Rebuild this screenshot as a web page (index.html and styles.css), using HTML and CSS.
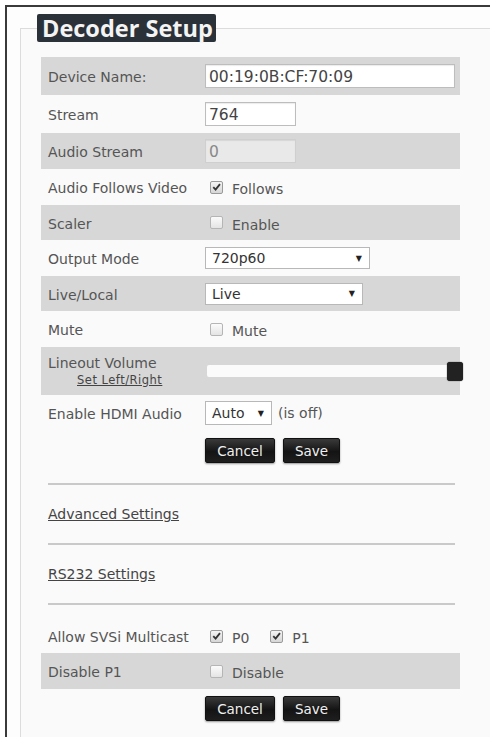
FILE: index.html
```html
<!DOCTYPE html>
<html>
<head>
<meta charset="utf-8">
<link rel="stylesheet" href="styles.css">
</head>
<body>
<div class="frame">
  <fieldset class="setup">
    <legend class="title">Decoder Setup</legend>
    <div class="rows">
      <div class="row alt tall">
        <div class="label">Device Name:</div>
        <div class="ctrl"><div class="input wide">00:19:0B:CF:70:09</div></div>
      </div>
      <div class="row tall">
        <div class="label">Stream</div>
        <div class="ctrl"><div class="input short">764</div></div>
      </div>
      <div class="row alt">
        <div class="label">Audio Stream</div>
        <div class="ctrl"><div class="input short disabled">0</div></div>
      </div>
      <div class="row">
        <div class="label">Audio Follows Video</div>
        <div class="ctrl"><span class="check on"><svg viewBox="0 0 12 12" width="12" height="12"><path d="M2.5 6.2 L5 8.8 L9.8 2.8" fill="none" stroke="#333" stroke-width="2"/></svg></span><span class="opt">Follows</span></div>
      </div>
      <div class="row alt short">
        <div class="label">Scaler</div>
        <div class="ctrl"><span class="check"></span><span class="opt">Enable</span></div>
      </div>
      <div class="row">
        <div class="label">Output Mode</div>
        <div class="ctrl"><div class="select mode"><span>720p60</span><span class="arrow">▼</span></div></div>
      </div>
      <div class="row alt short">
        <div class="label">Live/Local</div>
        <div class="ctrl"><div class="select live"><span>Live</span><span class="arrow">▼</span></div></div>
      </div>
      <div class="row">
        <div class="label">Mute</div>
        <div class="ctrl"><span class="check"></span><span class="opt">Mute</span></div>
      </div>
      <div class="row alt volume">
        <div class="label stack"><span>Lineout Volume</span><a class="small">Set Left/Right</a></div>
        <div class="ctrl"><div class="slider"><div class="track"></div><div class="thumb"></div></div></div>
      </div>
      <div class="row">
        <div class="label">Enable HDMI Audio</div>
        <div class="ctrl"><div class="select auto"><span>Auto</span><span class="arrow">▼</span></div><span class="note">(is off)</span></div>
      </div>
      <div class="buttons first">
        <button class="btn cancel">Cancel</button>
        <button class="btn save">Save</button>
      </div>
      <hr class="sep">
      <div class="linkrow"><a class="link">Advanced Settings</a></div>
      <hr class="sep">
      <div class="linkrow"><a class="link">RS232 Settings</a></div>
      <hr class="sep">
      <div class="row multicast">
        <div class="label">Allow SVSi Multicast</div>
        <div class="ctrl"><span class="check on"><svg viewBox="0 0 12 12" width="12" height="12"><path d="M2.5 6.2 L5 8.8 L9.8 2.8" fill="none" stroke="#333" stroke-width="2"/></svg></span><span class="opt">P0</span><span class="check on gapl"><svg viewBox="0 0 12 12" width="12" height="12"><path d="M2.5 6.2 L5 8.8 L9.8 2.8" fill="none" stroke="#333" stroke-width="2"/></svg></span><span class="opt">P1</span></div>
      </div>
      <div class="row alt">
        <div class="label">Disable P1</div>
        <div class="ctrl"><span class="check"></span><span class="opt">Disable</span></div>
      </div>
      <div class="buttons second">
        <button class="btn cancel">Cancel</button>
        <button class="btn save">Save</button>
      </div>
    </div>
  </fieldset>
</div>
</body>
</html>
```
FILE: styles.css
```css
html, body {
  margin: 0;
  padding: 0;
  background: #ffffff;
}
body {
  font-family: "DejaVu Sans", Verdana, sans-serif;
  color: #555;
  overflow: hidden;
}
.frame {
  margin: 5px 0 0 5px;
  height: 740px;
  border-top: 2px solid #3a3a3a;
  border-left: 2px solid #3a3a3a;
  background: #fdfdfd;
  padding: 0 0 0 13px;
  box-sizing: border-box;
}
.setup {
  margin: 7px 0 0 0;
  padding: 0 0 20px 20px;
  border: 1px solid #dcdcdc;
  border-right: none;
  background: #fafafa;
  min-height: 730px;
  box-sizing: border-box;
}
.title {
  margin-left: -4px;
  padding: 0 3px 0 5px;
  height: 28px;
  line-height: 28px;
  background: #2b3139;
  color: #f4f4f4;
  font-family: "Open Sans", "DejaVu Sans", sans-serif;
  font-weight: 700;
  font-size: 23.5px;
  border-radius: 2px;
}
.rows {
  width: 419px;
  margin-top: 15px;
}
.row {
  display: grid;
  grid-template-columns: 164px 1fr;
  align-items: center;
  height: 36px;
}
.row.tall {
  height: 38px;
}
.row.short {
  height: 35px;
}
.row.alt {
  background: #d7d7d7;
}
.label {
  padding-left: 7px;
  padding-top: 2px;
  font-size: 14px;
  color: #555;
  white-space: nowrap;
}
.ctrl {
  display: flex;
  align-items: center;
}
.input {
  height: 24px;
  line-height: 24px;
  box-sizing: border-box;
  border: 1px solid #bdbdbd;
  background: #fff;
  padding-left: 3px;
  font-size: 15.5px;
  color: #444;
  box-shadow: inset 0 1px 1px rgba(0,0,0,0.08);
}
.input.wide {
  width: 250px;
}
.input.short {
  width: 91px;
}
.input.disabled {
  background: #e9e9e9;
  color: #888;
  border-color: #cfcfcf;
}
.check {
  width: 13px;
  height: 13px;
  box-sizing: border-box;
  border: 1px solid #b5b5b5;
  border-radius: 2px;
  background: linear-gradient(#fbfbfb, #e4e4e4);
  margin-left: 5px;
  display: flex;
  align-items: center;
  justify-content: center;
}
.check.on {
  background: linear-gradient(#f4f4f4, #d6d6d6);
  border-color: #9a9a9a;
}
.check.gapl {
  margin-left: 21px;
}
.opt {
  margin-left: 9px;
  font-size: 14px;
  color: #555;
  padding-top: 4px;
}
.select {
  height: 22px;
  box-sizing: border-box;
  border: 1px solid #b8b8b8;
  background: #fff;
  display: flex;
  align-items: center;
  justify-content: space-between;
  padding: 0 7px 0 6px;
  font-size: 14px;
  color: #333;
}
.select.mode {
  width: 165px;
}
.select.live {
  width: 158px;
}
.select.auto {
  width: 67px;
  height: 24px;
}
.arrow {
  font-size: 8px;
  color: #222;
}
.note {
  margin-left: 6px;
  font-size: 14px;
  color: #555;
}
.row.volume {
  height: 48px;
}
.label.stack {
  display: flex;
  flex-direction: column;
  line-height: 18px;
  padding-top: 0;
}
.small {
  font-size: 11.5px;
  letter-spacing: 0.5px;
  text-decoration: underline;
  color: #444;
  padding-left: 29px;
  line-height: 16px;
}
.slider {
  position: relative;
  width: 256px;
  height: 19px;
  display: flex;
  align-items: center;
}
.track {
  margin-left: 2px;
  width: 244px;
  height: 12px;
  background: #fbfbfb;
  border-radius: 2px;
}
.thumb {
  position: absolute;
  left: 242px;
  top: 0;
  width: 16px;
  height: 19px;
  background: #222;
  border-radius: 3px;
  box-shadow: 0 0 1px #000;
}
.buttons {
  display: flex;
  gap: 8px;
  padding-left: 164px;
}
.buttons.first {
  margin-top: 7px;
}
.buttons.second {
  margin-top: 7px;
}
.btn {
  height: 25px;
  border: 1px solid #111;
  border-radius: 2px;
  background: linear-gradient(#3a3a3a, #141414 55%, #1e1e1e);
  color: #f0f0f0;
  font-family: "DejaVu Sans", Verdana, sans-serif;
  font-size: 13.5px;
  padding: 0;
  box-shadow: 0 1px 2px rgba(0,0,0,0.4);
}
.btn.cancel {
  width: 70px;
}
.btn.save {
  width: 57px;
}
.sep {
  margin: 20px 0 0 7px;
  width: 407px;
  border: none;
  border-top: 2px solid #c9c9c9;
  height: 0;
}
.linkrow {
  height: 58px;
  display: flex;
  align-items: center;
  padding-left: 7px;
}
.link {
  font-size: 14px;
  color: #444;
  text-decoration: underline;
}
.linkrow + .sep {
  margin-top: 0;
}
.row.multicast {
  margin-top: 14px;
  height: 34px;
}
```
